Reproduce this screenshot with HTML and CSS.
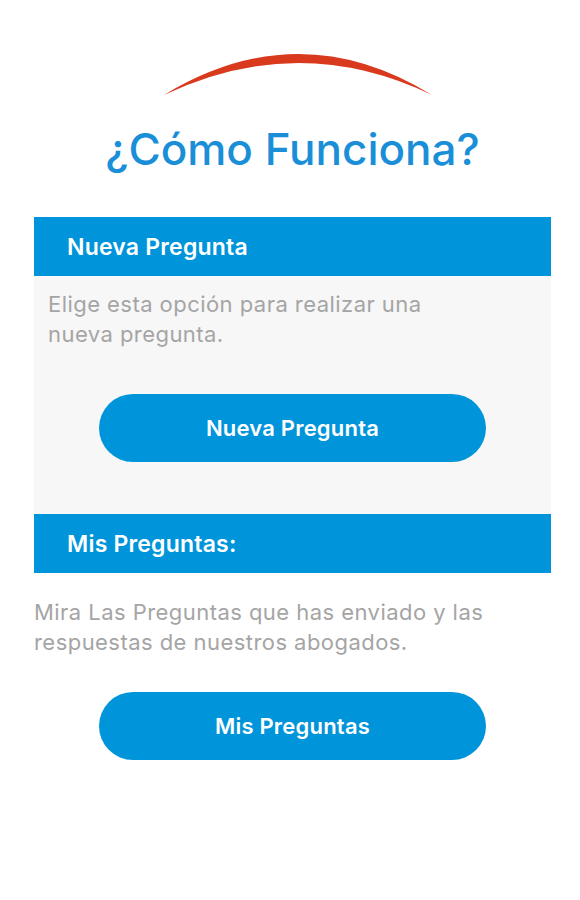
FILE: index.html
```html
<!DOCTYPE html>
<html lang="es">
<head>
    <meta charset="UTF-8">
    <meta name="viewport" content="width=device-width, initial-scale=1.0">
    <title>¿Cómo Funciona?</title>
    <link rel="stylesheet" href="styles.css">
</head>
<body>
    <div class="page">
        <svg class="arc" width="272" height="48" viewBox="0 0 272 48">
            <path d="M2 45 Q137 -37 270 45 Q137 -19 2 45 Z" fill="#d9391c"/>
        </svg>
        <h1 class="title">¿Cómo Funciona?</h1>

        <div class="section-head">Nueva Pregunta</div>
        <div class="panel">
            <p class="desc desc-inset">Elige esta opción para realizar una nueva pregunta.</p>
            <button class="pill">Nueva Pregunta</button>
        </div>

        <div class="section-head">Mis Preguntas:</div>
        <div class="plain">
            <p class="desc desc-wide">Mira Las Preguntas que has enviado y las respuestas de nuestros abogados.</p>
            <button class="pill">Mis Preguntas</button>
        </div>
    </div>
</body>
</html>
```

FILE: styles.css
```css
body {
    margin: 0;
    background: #ffffff;
    font-family: Inter, "Noto Sans", sans-serif;
}
.page {
    padding: 0 29px 0 34px;
}
.arc {
    display: block;
    margin: 50px 0 0 128px;
}
.title {
    margin: 25px 0 42px;
    text-align: center;
    font-size: 44px;
    font-weight: 500;
    color: #1a8fd8;
    line-height: 52px;
}
.section-head {
    height: 59px;
    display: flex;
    align-items: center;
    padding-left: 33px;
    background: #0095da;
    color: #ffffff;
    font-size: 23px;
    font-weight: 600;
    letter-spacing: 0.2px;
}
.panel {
    background: #f7f7f7;
    padding: 13px 14px 52px;
}
.plain {
    padding: 24px 0 0;
}
.desc {
    margin: 0;
    font-size: 22px;
    line-height: 30px;
    letter-spacing: 0.45px;
    color: #a5a5a5;
}
.desc-inset {
    max-width: 420px;
}
.desc-wide {
    max-width: 500px;
}
.pill {
    display: block;
    width: 387px;
    height: 68px;
    margin: 45px auto 0;
    border: none;
    border-radius: 34px;
    background: #0095da;
    color: #ffffff;
    font-family: inherit;
    font-size: 22px;
    font-weight: 600;
    letter-spacing: 0.2px;
    cursor: pointer;
}
.plain .pill {
    margin-top: 35px;
}
```
